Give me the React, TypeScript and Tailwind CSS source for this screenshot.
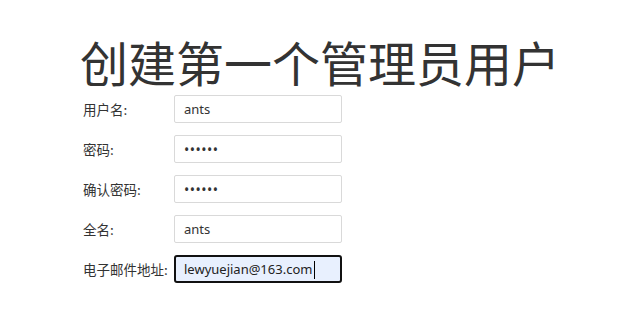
import { useState } from 'react';

const fields = [
  { label: '用户名:', type: 'text', value: 'ants' },
  { label: '密码:', type: 'password', value: '123456' },
  { label: '确认密码:', type: 'password', value: '123456' },
  { label: '全名:', type: 'text', value: 'ants' },
];

export default function App() {
  const [email, setEmail] = useState('lewyuejian@163.com');

  return (
    <div className="min-h-screen bg-white pl-[80px] pt-[33px] text-[#333]" style={{ fontFamily: '"Noto Sans", "Noto Sans CJK SC", sans-serif' }}>
      <h1 className="text-[48px] leading-[56px] font-normal text-[#333]" style={{ fontFamily: '"Noto Sans CJK SC", sans-serif' }}>
        创建第一个管理员用户
      </h1>
      <form className="mt-[6px] flex flex-col gap-[12px]">
        {fields.map((f, i) => (
          <div key={i} className="flex items-center pl-[3px]">
            <label className="w-[91px] text-[13.5px] text-[#333]" style={{ fontFamily: '"Noto Sans CJK SC", sans-serif' }}>{f.label}</label>
            <input
              type={f.type}
              defaultValue={f.value}
              className={`h-[28px] w-[168px] rounded-[2px] border border-[#d9d9d9] px-[9px] text-[#333] outline-none ${f.type === 'password' ? 'text-[14px] tracking-[0.5px]' : 'text-[13px]'}`}
            />
          </div>
        ))}
        <div className="flex items-center pl-[3px]">
          <label className="w-[91px] text-[13.5px] text-[#333] whitespace-nowrap" style={{ fontFamily: '"Noto Sans CJK SC", sans-serif' }}>电子邮件地址:</label>
          <div className="relative">
            <input
              type="text"
              value={email}
              onChange={e => setEmail(e.target.value)}
              className="h-[28px] w-[168px] rounded-[3px] border-2 border-[#111] bg-[#e8f0fe] px-[8px] text-[13px] text-[#222] outline-none"
            />
            <span className="absolute left-[140px] top-[6px] h-[18px] w-px bg-black" />
          </div>
        </div>
      </form>
    </div>
  );
}
